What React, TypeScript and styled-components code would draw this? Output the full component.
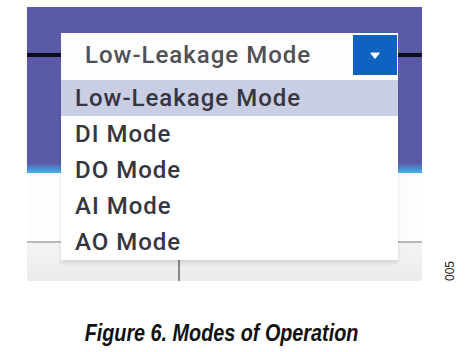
import styled, { createGlobalStyle } from "styled-components";

// 모드 목록
const MODES = ["Low-Leakage Mode", "DI Mode", "DO Mode", "AI Mode", "AO Mode"];

const GlobalStyle = createGlobalStyle`
  html, body {
    margin: 0;
    padding: 0;
    background: #ffffff;
  }
`;

/**
 * @desc 모드 선택 드롭다운이 펼쳐진 화면 캡처와 그림 설명입니다.
 */
function App(): JSX.Element {
  const selected = MODES[0];

  return (
    <>
      <GlobalStyle />
      <PageDiv>
        <FigureRow>
          {/** 캡처 화면 영역입니다. */}
          <ShotFrame>
            <PurplePanel>
              <WireRule />
            </PurplePanel>
            <BlankArea />
            <GrayRule />
            <StatusBar>
              <StatusTick />
            </StatusBar>

            {/** 펼쳐진 드롭다운입니다. */}
            <DropdownDiv>
              <SelectHead>
                <SelectText>{selected}</SelectText>
                <ArrowButton>
                  <svg width="10" height="7" viewBox="0 0 10 7">
                    <path d="M1 1.2 H9 L5 6 Z" fill="#ffffff" stroke="#ffffff" strokeWidth="1.2" strokeLinejoin="round" />
                  </svg>
                </ArrowButton>
              </SelectHead>
              <OptionList>
                {MODES.map((mode) => (
                  <OptionItem key={mode} $active={mode === selected}>
                    {mode}
                  </OptionItem>
                ))}
              </OptionList>
            </DropdownDiv>
          </ShotFrame>

          <SideLabel>005</SideLabel>
        </FigureRow>

        <Caption>Figure 6. Modes of Operation</Caption>
      </PageDiv>
    </>
  );
}

export default App;

const PageDiv = styled.div`
  width: 465px;
  height: 352px;
  display: flex;
  flex-direction: column;
  padding: 7px 0 0 27px;
  box-sizing: border-box;
`;

const FigureRow = styled.div`
  display: flex;
  align-items: flex-end;
`;

const ShotFrame = styled.div`
  position: relative;
  width: 395px;
  display: flex;
  flex-direction: column;
`;

const PurplePanel = styled.div`
  height: 166px;
  background: linear-gradient(
    to bottom,
    #5b5aa9 0%,
    #5b5aa9 94%,
    #4f86cf 97%,
    #3cb6ea 100%
  );
  padding-top: 46px;
  box-sizing: border-box;
`;

const WireRule = styled.div`
  height: 4px;
  background: #0d0d1a;
`;

const BlankArea = styled.div`
  height: 68px;
  background: #fdfdfd;
`;

const GrayRule = styled.div`
  height: 2px;
  background: #b9b9b9;
`;

const StatusBar = styled.div`
  height: 38px;
  background: linear-gradient(to bottom, #f4f4f4, #ebebeb);
  display: flex;
  align-items: flex-end;
  padding-left: 151px;
`;

const StatusTick = styled.div`
  width: 2px;
  height: 22px;
  background: #8a8a8a;
`;

const DropdownDiv = styled.div`
  position: absolute;
  top: 26px;
  left: 34px;
  width: 337px;
  display: flex;
  flex-direction: column;
  font-family: Roboto, "DejaVu Sans", sans-serif;
  font-weight: 500;
  font-size: 24px;
  letter-spacing: 1px;
`;

const SelectHead = styled.div`
  height: 47px;
  background: #fefefe;
  display: flex;
  align-items: flex-start;
  justify-content: space-between;
  padding: 2px 1px 0 24px;
  box-sizing: border-box;
`;

const SelectText = styled.div`
  margin-top: 6px;
  color: #505055;
`;

const ArrowButton = styled.div`
  width: 44px;
  height: 40px;
  background: #0f63c0;
  display: flex;
  align-items: center;
  justify-content: center;
`;

const OptionList = styled.div`
  display: flex;
  flex-direction: column;
  background: #ffffff;
  box-shadow: 0 3px 4px rgba(0, 0, 0, 0.12);
`;

const OptionItem = styled.div<{ $active: boolean }>`
  height: 36px;
  line-height: 36px;
  padding-left: 14px;
  color: #36363f;
  background: ${({ $active }) => ($active ? "#c9cee5" : "#ffffff")};
`;

const SideLabel = styled.div`
  margin-left: 21px;
  writing-mode: vertical-rl;
  transform: rotate(180deg);
  font-family: "Liberation Sans", Arial, sans-serif;
  font-size: 12px;
  color: #222222;
`;

const Caption = styled.div`
  width: 389px;
  margin-top: 39px;
  text-align: center;
  font-family: "Liberation Sans", Arial, sans-serif;
  font-weight: bold;
  font-style: italic;
  font-size: 23px;
  color: #111111;
  transform: scaleX(0.86);
`;
